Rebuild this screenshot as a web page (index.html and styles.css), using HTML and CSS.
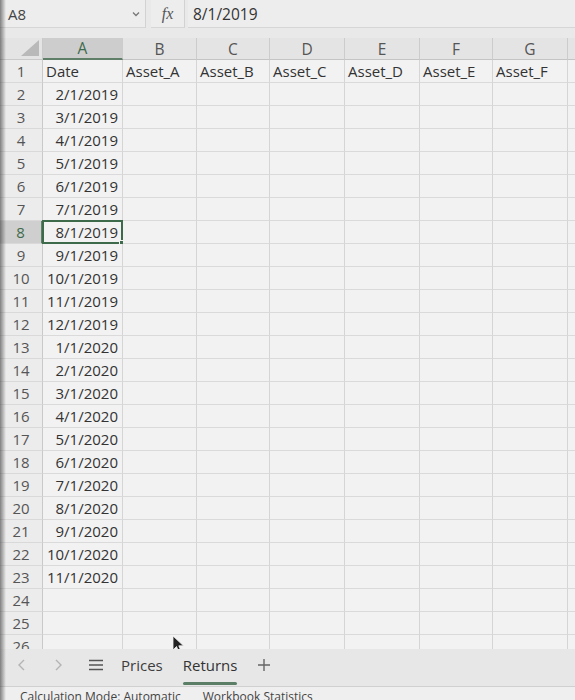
FILE: index.html
```html
<!DOCTYPE html>
<html>
<head>
<meta charset="utf-8">
<link rel="stylesheet" href="styles.css">
</head>
<body>
<div class="app">
  <div class="fbar">
    <div class="namebox"><span>A8</span>
      <svg class="chev" width="10" height="8" viewBox="0 0 10 8"><path d="M2 2.5 L5 5.5 L8 2.5" fill="none" stroke="#777" stroke-width="1.3"/></svg>
    </div>
    <div class="fx">fx</div>
    <div class="fval">8/1/2019</div>
  </div>
  <div class="sheet">
    <div class="grid">
      <div class="corner"><svg width="18" height="16" viewBox="0 0 18 16"><path d="M18 0 L18 16 L0 16 Z" fill="#b9b9b9"/></svg></div>
      <div class="ch sel">A</div><div class="ch">B</div><div class="ch">C</div><div class="ch">D</div><div class="ch">E</div><div class="ch">F</div><div class="ch">G</div><div class="ch"></div>

      <div class="rh">1</div><div class="c">Date</div><div class="c">Asset_A</div><div class="c">Asset_B</div><div class="c">Asset_C</div><div class="c">Asset_D</div><div class="c">Asset_E</div><div class="c">Asset_F</div><div class="c"></div>
      <div class="rh">2</div><div class="c r">2/1/2019</div><div class="c"></div><div class="c"></div><div class="c"></div><div class="c"></div><div class="c"></div><div class="c"></div><div class="c"></div>
      <div class="rh">3</div><div class="c r">3/1/2019</div><div class="c"></div><div class="c"></div><div class="c"></div><div class="c"></div><div class="c"></div><div class="c"></div><div class="c"></div>
      <div class="rh">4</div><div class="c r">4/1/2019</div><div class="c"></div><div class="c"></div><div class="c"></div><div class="c"></div><div class="c"></div><div class="c"></div><div class="c"></div>
      <div class="rh">5</div><div class="c r">5/1/2019</div><div class="c"></div><div class="c"></div><div class="c"></div><div class="c"></div><div class="c"></div><div class="c"></div><div class="c"></div>
      <div class="rh">6</div><div class="c r">6/1/2019</div><div class="c"></div><div class="c"></div><div class="c"></div><div class="c"></div><div class="c"></div><div class="c"></div><div class="c"></div>
      <div class="rh">7</div><div class="c r">7/1/2019</div><div class="c"></div><div class="c"></div><div class="c"></div><div class="c"></div><div class="c"></div><div class="c"></div><div class="c"></div>
      <div class="rh sel">8</div><div class="c r active">8/1/2019<span class="handle"></span></div><div class="c"></div><div class="c"></div><div class="c"></div><div class="c"></div><div class="c"></div><div class="c"></div><div class="c"></div>
      <div class="rh">9</div><div class="c r">9/1/2019</div><div class="c"></div><div class="c"></div><div class="c"></div><div class="c"></div><div class="c"></div><div class="c"></div><div class="c"></div>
      <div class="rh">10</div><div class="c r">10/1/2019</div><div class="c"></div><div class="c"></div><div class="c"></div><div class="c"></div><div class="c"></div><div class="c"></div><div class="c"></div>
      <div class="rh">11</div><div class="c r">11/1/2019</div><div class="c"></div><div class="c"></div><div class="c"></div><div class="c"></div><div class="c"></div><div class="c"></div><div class="c"></div>
      <div class="rh">12</div><div class="c r">12/1/2019</div><div class="c"></div><div class="c"></div><div class="c"></div><div class="c"></div><div class="c"></div><div class="c"></div><div class="c"></div>
      <div class="rh">13</div><div class="c r">1/1/2020</div><div class="c"></div><div class="c"></div><div class="c"></div><div class="c"></div><div class="c"></div><div class="c"></div><div class="c"></div>
      <div class="rh">14</div><div class="c r">2/1/2020</div><div class="c"></div><div class="c"></div><div class="c"></div><div class="c"></div><div class="c"></div><div class="c"></div><div class="c"></div>
      <div class="rh">15</div><div class="c r">3/1/2020</div><div class="c"></div><div class="c"></div><div class="c"></div><div class="c"></div><div class="c"></div><div class="c"></div><div class="c"></div>
      <div class="rh">16</div><div class="c r">4/1/2020</div><div class="c"></div><div class="c"></div><div class="c"></div><div class="c"></div><div class="c"></div><div class="c"></div><div class="c"></div>
      <div class="rh">17</div><div class="c r">5/1/2020</div><div class="c"></div><div class="c"></div><div class="c"></div><div class="c"></div><div class="c"></div><div class="c"></div><div class="c"></div>
      <div class="rh">18</div><div class="c r">6/1/2020</div><div class="c"></div><div class="c"></div><div class="c"></div><div class="c"></div><div class="c"></div><div class="c"></div><div class="c"></div>
      <div class="rh">19</div><div class="c r">7/1/2020</div><div class="c"></div><div class="c"></div><div class="c"></div><div class="c"></div><div class="c"></div><div class="c"></div><div class="c"></div>
      <div class="rh">20</div><div class="c r">8/1/2020</div><div class="c"></div><div class="c"></div><div class="c"></div><div class="c"></div><div class="c"></div><div class="c"></div><div class="c"></div>
      <div class="rh">21</div><div class="c r">9/1/2020</div><div class="c"></div><div class="c"></div><div class="c"></div><div class="c"></div><div class="c"></div><div class="c"></div><div class="c"></div>
      <div class="rh">22</div><div class="c r">10/1/2020</div><div class="c"></div><div class="c"></div><div class="c"></div><div class="c"></div><div class="c"></div><div class="c"></div><div class="c"></div>
      <div class="rh">23</div><div class="c r">11/1/2020</div><div class="c"></div><div class="c"></div><div class="c"></div><div class="c"></div><div class="c"></div><div class="c"></div><div class="c"></div>
      <div class="rh">24</div><div class="c"></div><div class="c"></div><div class="c"></div><div class="c"></div><div class="c"></div><div class="c"></div><div class="c"></div><div class="c"></div>
      <div class="rh">25</div><div class="c"></div><div class="c"></div><div class="c"></div><div class="c"></div><div class="c"></div><div class="c"></div><div class="c"></div><div class="c"></div>
      <div class="rh">26</div><div class="c"></div><div class="c"></div><div class="c"></div><div class="c"></div><div class="c"></div><div class="c"></div><div class="c"></div><div class="c"></div>
    </div>
    <svg class="cursor" width="14" height="20" viewBox="0 0 14 20"><path d="M1 1 L1 15 L4.5 11.5 L7 17.5 L9.2 16.5 L6.8 10.8 L11.5 10.8 Z" fill="#222" stroke="#f2f2f2" stroke-width="0.8"/></svg>
  </div>
  <div class="tabs">
    <svg class="nav" width="12" height="14" viewBox="0 0 12 14"><path d="M8 2 L3 7 L8 12" fill="none" stroke="#b4b4b4" stroke-width="1.4"/></svg>
    <svg class="nav n2" width="12" height="14" viewBox="0 0 12 14"><path d="M4 2 L9 7 L4 12" fill="none" stroke="#b4b4b4" stroke-width="1.4"/></svg>
    <svg class="menu" width="16" height="12" viewBox="0 0 16 12"><path d="M1 1.5 H15 M1 6 H15 M1 10.5 H15" stroke="#555" stroke-width="1.4"/></svg>
    <span class="tab">Prices</span>
    <span class="tab on">Returns</span>
    <svg class="plus" width="14" height="14" viewBox="0 0 14 14"><path d="M7 1 V13 M1 7 H13" stroke="#666" stroke-width="1.4"/></svg>
  </div>
  <div class="status">
    <span class="st1">Calculation Mode: Automatic</span>
    <span class="st2">Workbook Statistics</span>
  </div>
  <div class="bezel"></div>
</div>
</body>
</html>
```
FILE: styles.css
```css
* { box-sizing: border-box; }
html, body { margin: 0; padding: 0; }
body {
  width: 575px; height: 700px; overflow: hidden;
  background: #ececec;
  font-family: "Open Sans", "Liberation Sans", sans-serif;
  color: #333;
}
.app { position: relative; width: 575px; height: 700px; overflow: hidden; }

.fbar {
  height: 38px;
  display: flex;
  align-items: flex-start;
  background: #e9e9e9;
}
.namebox {
  width: 146px; height: 28px;
  display: flex; align-items: center; justify-content: space-between;
  padding: 0 4px 0 8px;
  background: #ededed;
  border-right: 1px solid #d2d2d2;
  border-bottom: 1px solid #d6d6d6;
  font-size: 15px; color: #444;
}
.chev { margin-top: 1px; }
.fx {
  margin-left: 5px;
  width: 34px; height: 28px;
  display: flex; align-items: center; justify-content: center;
  background: #ededed;
  border-right: 1px solid #d2d2d2;
  border-bottom: 1px solid #d6d6d6;
  font-family: "Liberation Serif", serif; font-style: italic;
  font-size: 16px; color: #555;
}
.fval {
  margin-left: 3px;
  flex: 1; height: 28px;
  display: flex; align-items: center;
  padding-left: 5px;
  background: #ededed;
  border-bottom: 1px solid #d6d6d6;
  font-size: 15.5px; color: #333;
}

.sheet { position: relative; height: 611px; overflow: hidden; background: #f1f1f1; }
.grid {
  display: grid;
  grid-template-columns: 43px 80px 74px 73px 75px 75px 73px 75px 60px;
  grid-template-rows: 22px;
  grid-auto-rows: 23px;
}
.corner {
  background: #e4e4e4;
  border-right: 1px solid #c9c9c9;
  border-bottom: 1px solid #c9c9c9;
  display: flex; align-items: flex-end; justify-content: flex-end;
  padding: 0 3px 3px 0;
}
.ch {
  background: #e4e4e4;
  border-right: 1px solid #cccccc;
  border-bottom: 1px solid #c4c4c4;
  display: flex; align-items: center; justify-content: center;
  font-size: 15.5px; color: #555;
}
.ch.sel { background: #cdcdcd; border-bottom: 2px solid #5f7f68; color: #3f6b4c; }
.rh {
  background: #ececec;
  border-right: 1px solid #c9c9c9;
  border-bottom: 1px solid #d9d9d9;
  display: flex; align-items: center; justify-content: center;
  font-size: 15px; color: #555;
}
.rh.sel { background: #cfcfcf; color: #3f6b4c; border-right: 2px solid #5f7f68; }
.c {
  position: relative;
  border-right: 1px solid #d5d5d5;
  border-bottom: 1px solid #dadada;
  display: flex; align-items: center;
  padding: 0 4px 0 3px;
  font-size: 15px; color: #333;
  white-space: nowrap; overflow: visible;
  background: #f2f2f2;
}
.c.r { justify-content: flex-end; }
.c.active { border: 2px solid #3e6a4c; margin: -1px 0 0 -1px; padding-right: 3px; }
.handle {
  position: absolute; right: -4px; bottom: -4px;
  width: 6px; height: 6px; background: #3e6a4c;
  border: 1px solid #f2f2f2;
}
.cursor { position: absolute; left: 172px; top: 597px; }

.tabs {
  position: relative;
  height: 37px;
  background: #e7e7e7;
  display: flex; align-items: center;
  padding-bottom: 5px;
  font-size: 15px;
}
.nav { margin-left: 16px; }
.nav.n2 { margin-left: 24px; }
.menu { margin-left: 24px; }
.tab { margin-left: 17px; color: #3d3d3d; position: relative; }
.tab.on { margin-left: 20px; color: #333; }
.tab.on::after {
  content: ""; position: absolute; left: 0; right: 0; bottom: -10px;
  height: 3px; background: #5b7f66; border-radius: 2px;
}
.plus { margin-left: 20px; }

.status {
  height: 14px;
  border-top: 1px solid #d0d0d0;
  background: #efefef;
  font-size: 12px; color: #444;
  display: flex; align-items: flex-start;
  padding-top: 3px;
  line-height: 14px;
}
.st1 { margin-left: 20px; }
.st2 { margin-left: 22px; }

.bezel {
  position: absolute; left: 0; top: 0; width: 6px; height: 700px;
  background: linear-gradient(to right, rgba(40,40,40,0.55), rgba(40,40,40,0));
}
```
